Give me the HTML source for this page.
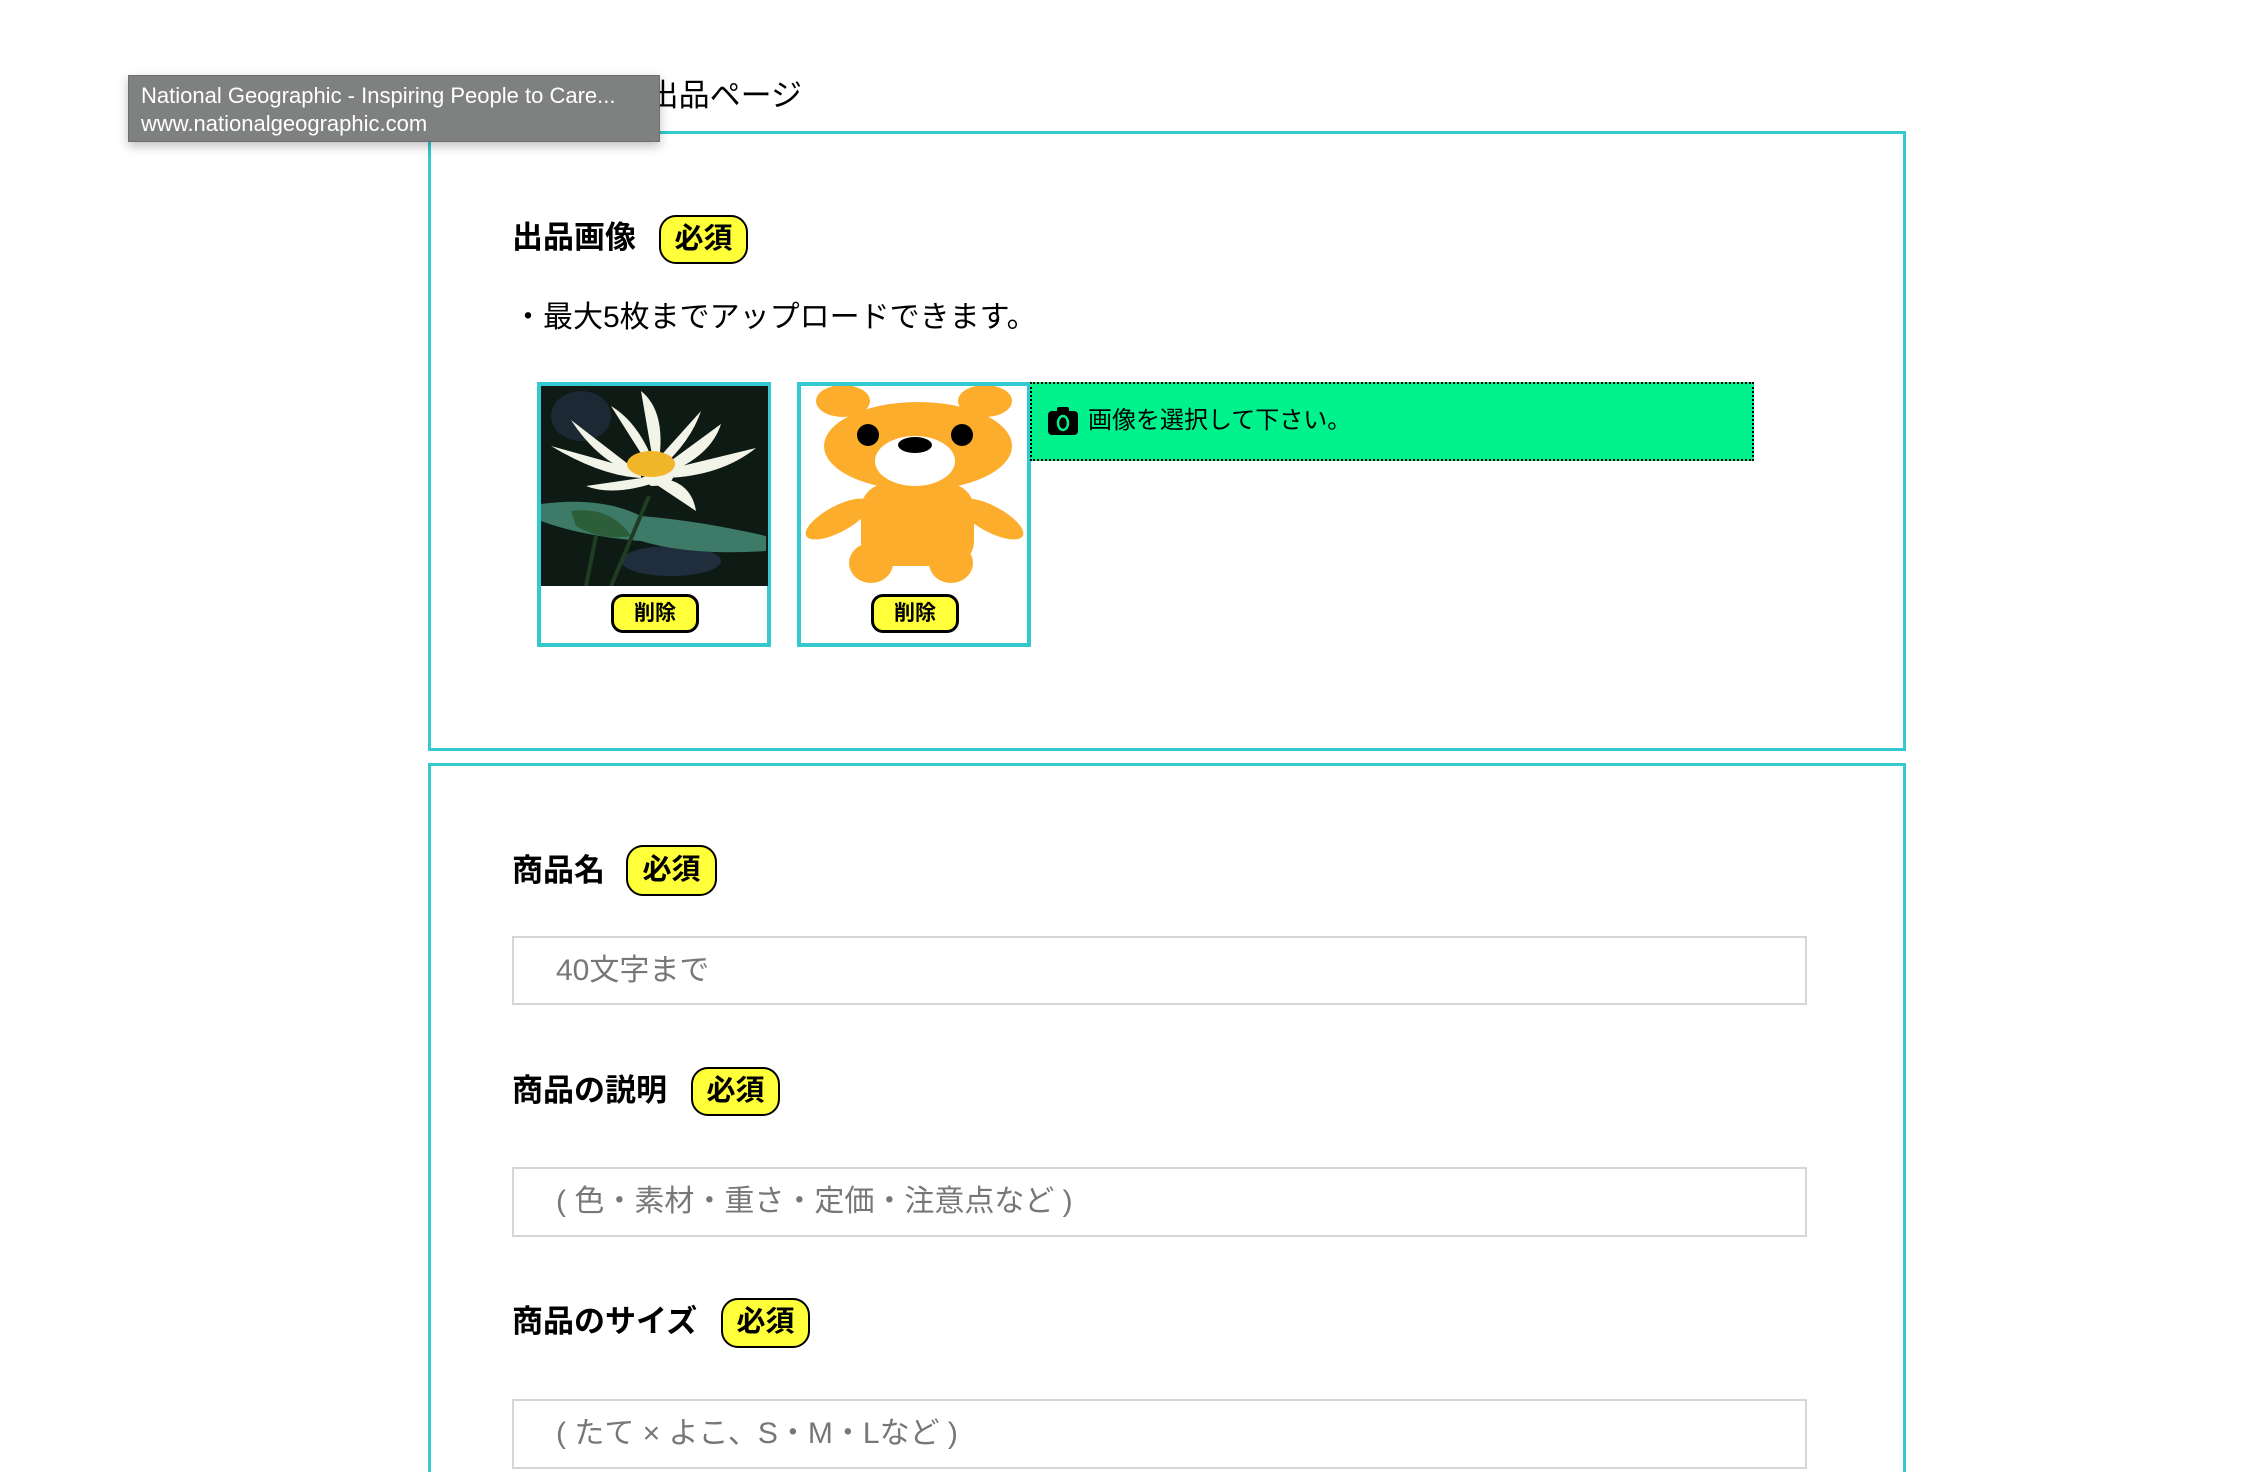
<!DOCTYPE html>
<html style="width:2266px;height:1472px;overflow:hidden"><head><meta charset="utf-8"><style>
*{margin:0;padding:0;box-sizing:border-box}
body{width:2266px;height:1472px;background:#fff;overflow:hidden;font-family:"Liberation Sans","Noto Sans CJK JP",sans-serif;color:#000}
#w{position:relative;width:2266px;height:1472px;overflow:hidden}
.a{position:absolute}
.box{position:absolute;border:3px solid #33c9cf}
.h{position:absolute;font-size:31px;font-weight:bold;line-height:1;white-space:nowrap}
.badge{position:absolute;background:#ffff3a;border:2px solid #000;border-radius:17px;font-size:29px;font-weight:bold;text-align:center;line-height:45px}
.inp{position:absolute;left:512px;width:1295px;border:2px solid #d6d6d6;font-size:30px;color:#777;padding-left:42px;white-space:nowrap}
.del{position:absolute;width:88px;height:39px;background:#ffff3a;border:3px solid #000;border-radius:12px;font-size:21px;font-weight:bold;text-align:center;line-height:33px}
</style></head><body><div id="w">
<div class="a" style="left:560px;top:76px;font-size:31px;line-height:40px;white-space:nowrap;width:242px;text-align:right">商品出品ページ</div>
<div class="box" style="left:428px;top:131px;width:1478px;height:620px"></div>
<div class="box" style="left:428px;top:763px;width:1478px;height:709px;border-bottom:none"></div>

<div class="h" style="left:512px;top:222px">出品画像</div>
<div class="badge" style="left:659px;top:215px;width:89px;height:49px">必須</div>
<div class="a" style="left:513px;top:300px;font-size:30px;line-height:36px;white-space:nowrap">・最大5枚までアップロードできます。</div>

<div class="box" style="left:537px;top:382px;width:234px;height:265px;border-width:4px"></div>
<svg class="a" style="left:541px;top:386px" width="227" height="200" viewBox="0 0 227 200">
<rect width="227" height="200" fill="#0e1a14"/>
<ellipse cx="40" cy="30" rx="30" ry="25" fill="#26324a" opacity=".6"/>
<ellipse cx="130" cy="175" rx="50" ry="15" fill="#2b3a58" opacity=".6"/>
<path d="M0 118 Q60 110 100 130 Q160 135 225 150 L225 165 Q150 170 100 155 Q40 150 0 135Z" fill="#3d7b68"/>
<path d="M30 125 Q70 120 90 150 Q60 155 35 140Z" fill="#2d5e3a"/>
<path d="M108 110 L70 200 M55 150 L45 200" stroke="#1f3d22" stroke-width="4" fill="none"/>
<g fill="#f2f4e8">
<path d="M108 80 L70 20 Q95 35 110 70Z"/><path d="M112 75 L100 5 Q125 25 118 75Z"/>
<path d="M115 75 L160 25 Q150 55 120 82Z"/><path d="M120 82 L180 38 Q170 70 125 88Z"/>
<path d="M120 85 L215 62 Q180 90 125 92Z"/><path d="M100 85 L10 60 Q60 90 100 92Z"/>
<path d="M100 88 L30 34 Q60 80 102 90Z"/><path d="M100 92 L45 100 Q70 110 110 98Z"/>
<path d="M110 95 L155 125 Q150 95 118 92Z"/><path d="M100 92 L130 80 Q140 100 110 100Z"/>
</g>
<ellipse cx="110" cy="78" rx="24" ry="13" fill="#f2b62a"/>
</svg>
<div class="del" style="left:611px;top:594px">削除</div>

<div class="box" style="left:797px;top:382px;width:234px;height:265px;border-width:4px"></div>
<svg class="a" style="left:801px;top:386px" width="226" height="200" viewBox="0 0 226 200">
<g fill="#fdad2c">
<ellipse cx="42" cy="15" rx="27" ry="16"/><ellipse cx="184" cy="15" rx="27" ry="16"/>
<ellipse cx="70" cy="177" rx="22" ry="20"/><ellipse cx="150" cy="177" rx="22" ry="20"/>
<ellipse cx="37" cy="133" rx="36" ry="13" transform="rotate(-28 37 133)"/>
<ellipse cx="190" cy="133" rx="36" ry="13" transform="rotate(28 190 133)"/>
<rect x="60" y="98" width="113" height="82" rx="25"/>
<ellipse cx="117" cy="60" rx="94" ry="44"/>
</g>
<ellipse cx="114" cy="75" rx="40" ry="25" fill="#fff"/>
<circle cx="67" cy="49" r="11" fill="#000"/><circle cx="161" cy="49" r="11" fill="#000"/>
<ellipse cx="114" cy="59" rx="17" ry="8" fill="#000"/>
</svg>
<div class="del" style="left:871px;top:594px">削除</div>

<div class="a" style="left:1030px;top:382px;width:724px;height:79px;background:#00f28c;border:2px dotted #000"></div>
<svg class="a" style="left:1048px;top:406px" width="30" height="30" viewBox="0 0 30 30">
<rect x="0" y="5" width="30" height="24" rx="4" fill="#000"/><rect x="9" y="1" width="12" height="6" rx="2" fill="#000"/>
<ellipse cx="15" cy="17" rx="5" ry="7" fill="none" stroke="#00f28c" stroke-width="2.5"/>
</svg>
<div class="a" style="left:1088px;top:405px;font-size:24px;line-height:32px;white-space:nowrap">画像を選択して下さい。</div>

<div class="h" style="left:512px;top:855px">商品名</div>
<div class="badge" style="left:626px;top:845px;width:91px;height:51px;line-height:47px">必須</div>
<div class="inp" style="top:936px;height:69px;line-height:65px">40文字まで</div>

<div class="h" style="left:512px;top:1075px">商品の説明</div>
<div class="badge" style="left:691px;top:1067px;width:89px;height:49px">必須</div>
<div class="inp" style="top:1167px;height:70px;line-height:66px">( 色・素材・重さ・定価・注意点など )</div>

<div class="h" style="left:512px;top:1306px">商品のサイズ</div>
<div class="badge" style="left:721px;top:1298px;width:89px;height:50px">必須</div>
<div class="inp" style="top:1399px;height:70px;line-height:66px">( たて × よこ、S・M・Lなど )</div>

<div class="a" style="left:128px;top:75px;width:532px;height:67px;background:#7f8181;border:1px solid #6d6e6e;box-shadow:0 4px 10px rgba(0,0,0,.25);color:#fff;font-size:22px;line-height:28px;padding:6px 0 0 12px;white-space:nowrap;overflow:hidden">National Geographic - Inspiring People to Care...<br>www.nationalgeographic.com</div>
</div></body></html>
